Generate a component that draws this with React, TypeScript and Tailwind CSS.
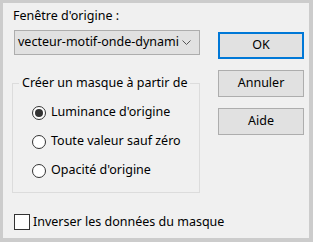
import React from 'react';

const Radio: React.FC<{ label: string; checked?: boolean }> = ({ label, checked }) => (
  <div className="flex items-center h-[29px]">
    <span className="w-[14px] h-[14px] rounded-full border border-[#333333] bg-white flex items-center justify-center">
      {checked && <span className="w-[8px] h-[8px] rounded-full bg-[#333333]" />}
    </span>
    <span className="ml-[5px]">{label}</span>
  </div>
);

const Btn: React.FC<{ label: string; primary?: boolean }> = ({ label, primary }) => (
  <button
    className={
      primary
        ? 'w-[86px] h-[27px] bg-[#e1e1e1] border-2 border-[#0078d7] text-black'
        : 'w-[86px] h-[27px] bg-[#e1e1e1] border border-[#adadad] text-black'
    }
  >
    {label}
  </button>
);

export default function App() {
  return (
    <div
      className="w-[313px] h-[242px] bg-[#cccccc] pt-[3px] pl-[3px] pr-[4px] pb-[4px] text-[12.5px] text-black"
      style={{ fontFamily: '"Noto Sans", sans-serif' }}
    >
      <div className="h-full bg-[#f0f0f0] flex flex-col">
        <div className="flex">
          <div className="w-[197px] pl-[9px]">
            <div className="pt-[5px] pl-[1px] leading-[16px]">Fenêtre d'origine :</div>
            <div className="mt-[6px] ml-[2px] w-[186px] h-[25px] bg-[#e1e1e1] border border-[#adadad] flex items-center pl-[3px] pr-[8px]">
              <span className="flex-1 whitespace-nowrap">vecteur-motif-onde-dynami</span>
              <svg width="9" height="6" viewBox="0 0 9 6" className="ml-[2px] shrink-0">
                <path d="M0.5 0.5 L4.5 4.5 L8.5 0.5" fill="none" stroke="#555" strokeWidth="1" />
              </svg>
            </div>
            <fieldset className="mt-[21px] w-[188px] min-w-0 h-[117px] border border-[#dcdcdc]">
              <legend className="ml-[6px] px-[3px] leading-[14px] whitespace-nowrap">Créer un masque à partir de</legend>
              <div className="pl-[19px] pt-[8px]">
                <Radio label="Luminance d'origine" checked />
                <Radio label="Toute valeur sauf zéro" />
                <Radio label="Opacité d'origine" />
              </div>
            </fieldset>
          </div>
          <div className="ml-[18px] pt-[29px] flex flex-col gap-[11px]">
            <Btn label="OK" primary />
            <Btn label="Annuler" />
            <Btn label="Aide" />
          </div>
        </div>
        <div className="mt-[20px] ml-[11px] flex items-center">
          <span className="w-[16px] h-[16px] border border-[#333333] bg-white" />
          <span className="ml-[3px]">Inverser les données du masque</span>
        </div>
      </div>
    </div>
  );
}
